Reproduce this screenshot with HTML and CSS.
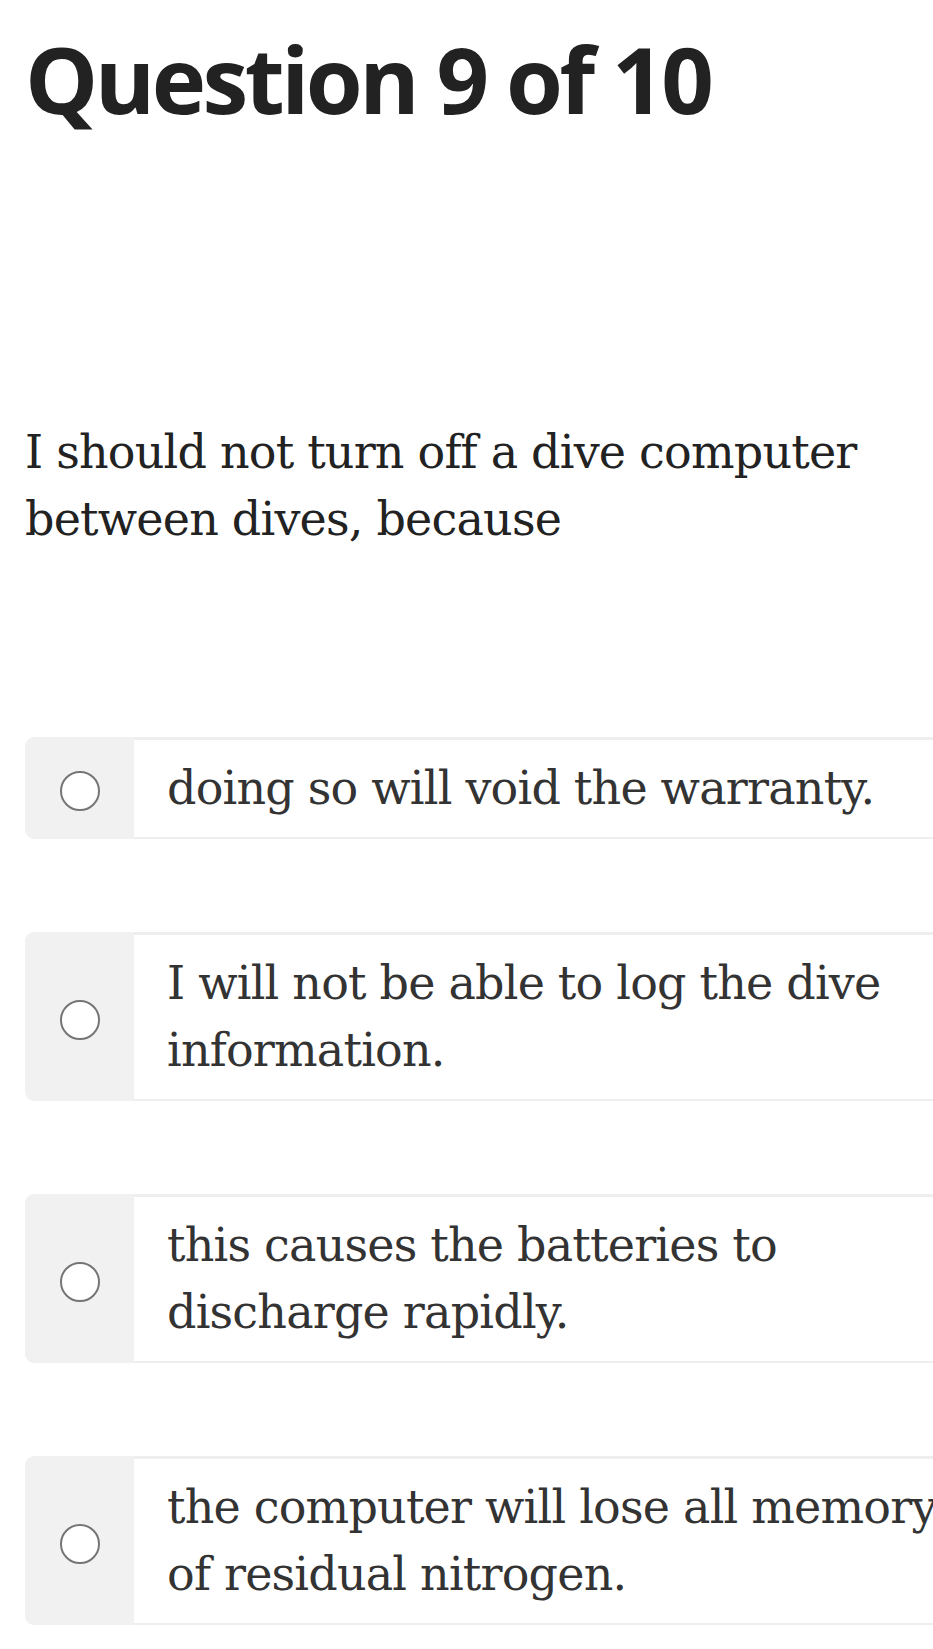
FILE: index.html
```html
<!DOCTYPE html>
<html lang="en">
<head>
<meta charset="utf-8">
<title>Question 9 of 10</title>
<link rel="stylesheet" href="styles.css">
</head>
<body>
<main class="quiz">
  <h1 class="quiz-title">Question 9 of 10</h1>
  <p class="quiz-question">I should not turn off a dive computer between dives, because</p>
  <ul class="options">
    <li class="option">
      <span class="option-mark"><span class="radio"></span></span>
      <span class="option-text">doing so will void the warranty.</span>
    </li>
    <li class="option">
      <span class="option-mark"><span class="radio"></span></span>
      <span class="option-text">I will not be able to log the dive information.</span>
    </li>
    <li class="option">
      <span class="option-mark"><span class="radio"></span></span>
      <span class="option-text">this causes the batteries to discharge rapidly.</span>
    </li>
    <li class="option">
      <span class="option-mark"><span class="radio"></span></span>
      <span class="option-text">the computer will lose all memory of residual nitrogen.</span>
    </li>
  </ul>
</main>
</body>
</html>
```
FILE: styles.css
```css
html, body {
  margin: 0;
  padding: 0;
  background: #ffffff;
  overflow-x: hidden;
}

.quiz {
  padding: 24px 0 0 25px;
}

.quiz-title {
  margin: 0;
  font-family: "Open Sans", "Noto Sans", sans-serif;
  font-weight: 700;
  font-size: 92px;
  line-height: 110px;
  letter-spacing: -3.5px;
  color: #222222;
}

.quiz-question {
  margin: 285px 0 0 0;
  width: 883px;
  font-family: "DejaVu Serif", "Liberation Serif", serif;
  font-size: 46px;
  line-height: 67px;
  letter-spacing: -0.8px;
  color: #222222;
}

.options {
  list-style: none;
  margin: 184px 0 0 0;
  padding: 0;
  display: flex;
  flex-direction: column;
  gap: 93px;
}

.option {
  display: flex;
  width: 970px;
  border-radius: 9px 0 0 9px;
  overflow: hidden;
}

.option-mark {
  flex: 0 0 109px;
  background: #f1f1f1;
  display: flex;
  align-items: center;
  justify-content: center;
  padding-top: 6px;
  box-sizing: border-box;
}

.radio {
  width: 36px;
  height: 36px;
  border: 2.5px solid #757575;
  border-radius: 50%;
  background: #ffffff;
}

.option-text {
  flex: 1 1 auto;
  border-top: 3px solid #eeeeee;
  border-bottom: 2px solid #eeeeee;
  padding: 15px 30px 15px 33px;
  font-family: "DejaVu Serif", "Liberation Serif", serif;
  font-size: 46px;
  line-height: 67px;
  letter-spacing: -0.8px;
  color: #333333;
}
```
